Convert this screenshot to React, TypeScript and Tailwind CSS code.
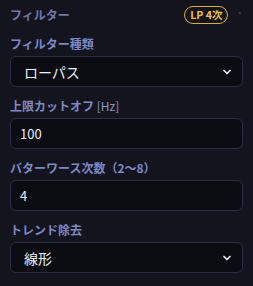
import { ChevronDown } from "lucide-react";

const font = { fontFamily: '"Noto Sans CJK JP", "Noto Sans", sans-serif' };

function Label({ children, extra }: { children: React.ReactNode; extra?: string }) {
  return (
    <div className="h-[16px] text-[12px] font-bold leading-[16px] text-[#7d88c4]">
      {children}
      {extra ? <span className="font-normal text-[#8f98c8]"> {extra}</span> : null}
    </div>
  );
}

function SelectBox({ value }: { value: string }) {
  return (
    <div className="mt-[4px] flex h-[31px] items-center justify-between rounded-[6px] border border-[#2a2d48] bg-[#0b0b12] pl-[13px] pr-[9px]">
      <span className="text-[14px] leading-none text-[#eceef5]">{value}</span>
      <ChevronDown className="size-[12px] text-[#e6e8f0]" strokeWidth={3.5} />
    </div>
  );
}

function InputBox({ value }: { value: string }) {
  return (
    <div className="mt-[4px] flex h-[31px] items-center rounded-[6px] border border-[#2a2d48] bg-[#0b0b12] px-[9px]">
      <span className="text-[13px] leading-none text-[#eceef5]">{value}</span>
    </div>
  );
}

export default function App() {
  return (
    <div className="h-[286px] w-[253px] overflow-hidden bg-[#14141f] px-[10px] pt-[5px]" style={font}>
      <div className="flex h-[20px] items-center justify-between">
        <span className="text-[12px] font-bold leading-none text-[#6f78a8]">フィルター</span>
        <div className="flex items-center gap-[10px] pr-[2px]">
          <span className="rounded-full border border-[#d9ae3a] px-[5px] text-[10.5px] font-bold leading-[16px] text-[#f0c14a]">
            LP 4次
          </span>
          <span className="text-[9px] leading-none text-[#8a8fa8]">˄</span>
        </div>
      </div>

      <div className="mt-[11px]">
        <Label>フィルター種類</Label>
        <SelectBox value="ローパス" />
      </div>

      <div className="mt-[11px]">
        <Label extra="[Hz]">上限カットオフ</Label>
        <InputBox value="100" />
      </div>

      <div className="mt-[11px]">
        <Label>バターワース次数（2〜8）</Label>
        <InputBox value="4" />
      </div>

      <div className="mt-[11px]">
        <Label>トレンド除去</Label>
        <SelectBox value="線形" />
      </div>
    </div>
  );
}
